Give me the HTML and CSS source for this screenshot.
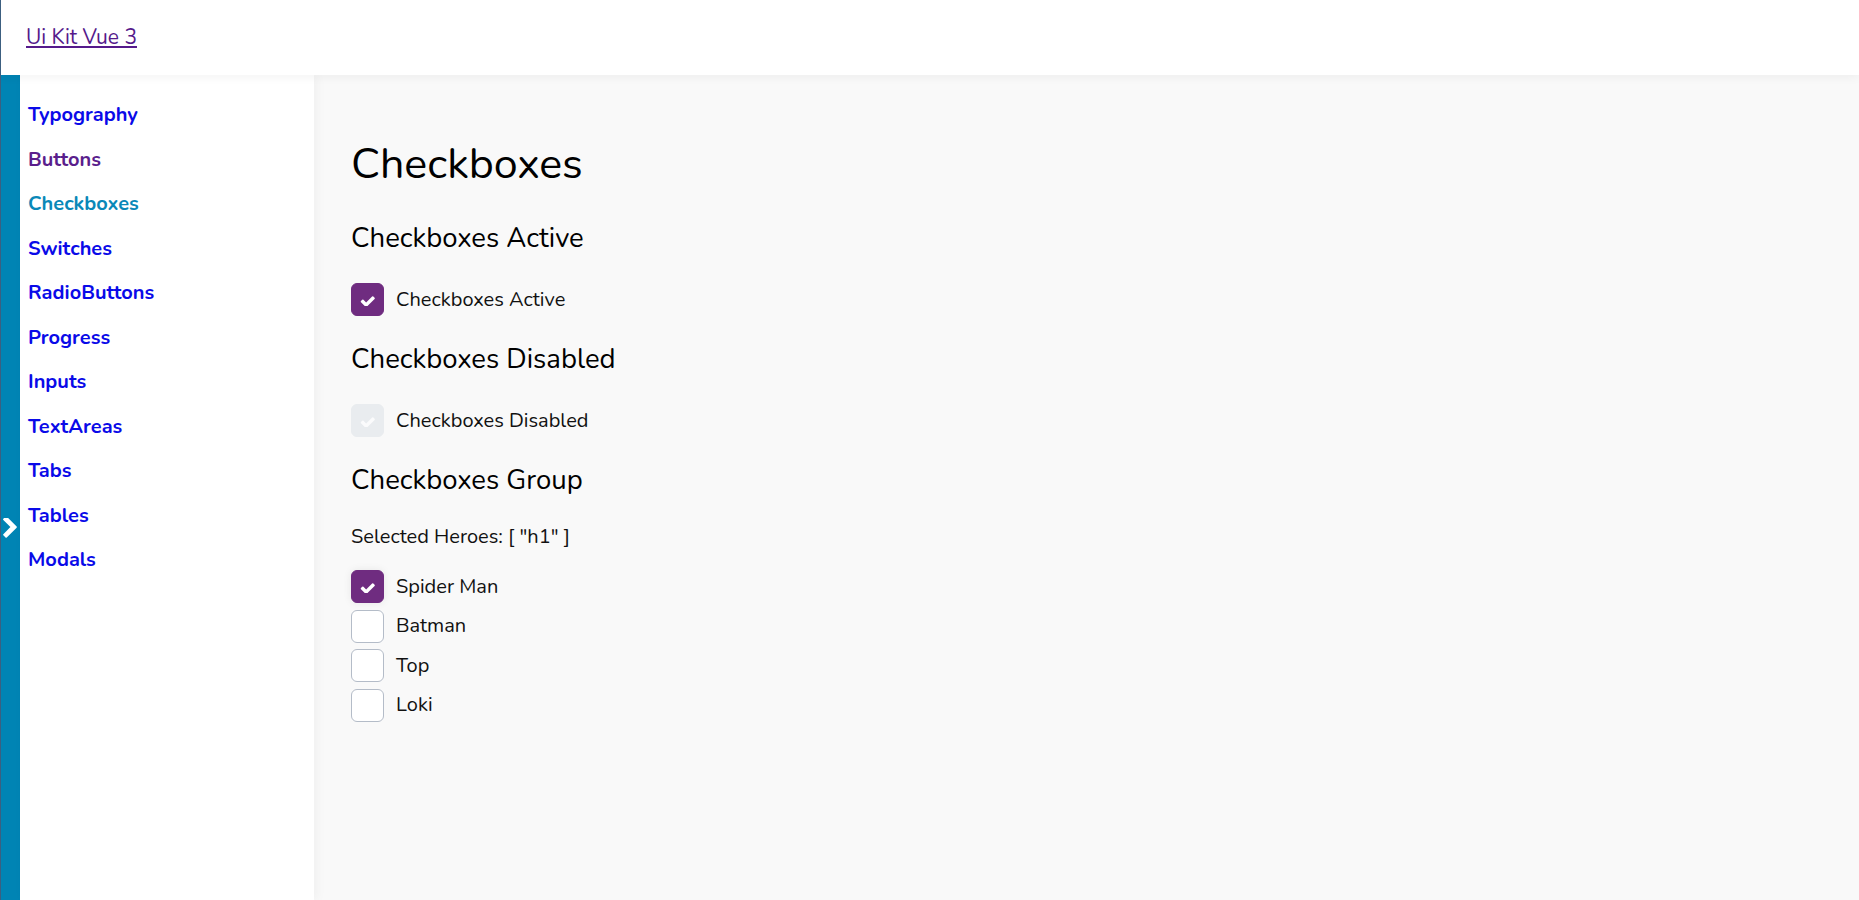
FILE: index.html
```html
<!DOCTYPE html>
<html lang="en">
<head>
<meta charset="utf-8">
<title>Ui Kit Vue 3</title>
<link rel="stylesheet" href="styles.css">
</head>
<body>
<div class="app">
  <header class="topbar">
    <a class="brand" href="#">Ui Kit Vue 3</a>
  </header>
  <div class="body">
    <div class="strip">
      <svg class="chev" viewBox="340 150 1050 1500" width="14" height="20"><path fill="#fff" d="M1363 877l-742 742q-19 19-45 19t-45-19l-166-166q-19-19-19-45t19-45l531-531-531-531q-19-19-19-45t19-45l166-166q19-19 45-19t45 19l742 742q19 19 19 45t-19 45z"/></svg>
    </div>
    <nav class="sidebar">
      <a class="nav-link" href="#">Typography</a>
      <a class="nav-link visited" href="#">Buttons</a>
      <a class="nav-link active" href="#">Checkboxes</a>
      <a class="nav-link" href="#">Switches</a>
      <a class="nav-link" href="#">RadioButtons</a>
      <a class="nav-link" href="#">Progress</a>
      <a class="nav-link" href="#">Inputs</a>
      <a class="nav-link" href="#">TextAreas</a>
      <a class="nav-link" href="#">Tabs</a>
      <a class="nav-link" href="#">Tables</a>
      <a class="nav-link" href="#">Modals</a>
    </nav>
    <main class="main">
      <h1 class="page-title">Checkboxes</h1>

      <section class="section">
        <h2 class="section-title">Checkboxes Active</h2>
        <label class="check">
          <span class="box checked"><svg class="tick" viewBox="40 300 1650 1100" width="15" height="10"><path d="M1671 566q0 40-28 68l-724 724-136 136q-28 28-68 28t-68-28l-136-136-362-362q-28-28-28-68t28-68l136-136q28-28 68-28t68 28l294 295 656-657q28-28 68-28t68 28l136 136q28 28 28 68z"/></svg></span>
          <span class="label">Checkboxes Active</span>
        </label>
      </section>

      <section class="section">
        <h2 class="section-title">Checkboxes Disabled</h2>
        <label class="check">
          <span class="box disabled"><svg class="tick" viewBox="40 300 1650 1100" width="15" height="10"><path d="M1671 566q0 40-28 68l-724 724-136 136q-28 28-68 28t-68-28l-136-136-362-362q-28-28-28-68t28-68l136-136q28-28 68-28t68 28l294 295 656-657q28-28 68-28t68 28l136 136q28 28 28 68z"/></svg></span>
          <span class="label">Checkboxes Disabled</span>
        </label>
      </section>

      <section class="section">
        <h2 class="section-title">Checkboxes Group</h2>
        <p class="selected">Selected Heroes: [ "h1" ]</p>
        <div class="group">
          <label class="check">
            <span class="box checked glow"><svg class="tick" viewBox="40 300 1650 1100" width="15" height="10"><path d="M1671 566q0 40-28 68l-724 724-136 136q-28 28-68 28t-68-28l-136-136-362-362q-28-28-28-68t28-68l136-136q28-28 68-28t68 28l294 295 656-657q28-28 68-28t68 28l136 136q28 28 28 68z"/></svg></span>
            <span class="label">Spider Man</span>
          </label>
          <label class="check">
            <span class="box"></span>
            <span class="label">Batman</span>
          </label>
          <label class="check">
            <span class="box"></span>
            <span class="label">Top</span>
          </label>
          <label class="check">
            <span class="box"></span>
            <span class="label">Loki</span>
          </label>
        </div>
      </section>
    </main>
  </div>
</div>
</body>
</html>
```

FILE: styles.css
```css
* { box-sizing: border-box; }

html, body {
  margin: 0;
  height: 100%;
}

body {
  font-family: "Nunito", "Open Sans", "Noto Sans", sans-serif;
  color: #111;
  background: #f8f8f8;
}

.app {
  display: flex;
  flex-direction: column;
  height: 900px;
  border-left: 1px solid #3c5f80;
  overflow: hidden;
}

.topbar {
  height: 75px;
  flex: none;
  background: #fff;
  display: flex;
  align-items: center;
  padding-left: 25px;
  position: relative;
  z-index: 3;
  box-shadow: 0 2px 10px rgba(0, 0, 0, 0.05);
}

.brand {
  color: #551a8b;
  font-size: 21px;
  line-height: 24px;
  text-decoration: underline;
  text-underline-offset: 2px;
  margin-top: -2px;
}

.body {
  flex: 1;
  display: flex;
  min-height: 0;
}

.strip {
  width: 19px;
  flex: none;
  background: #0084b4;
  display: flex;
  flex-direction: column;
  align-items: center;
  padding-top: 443px;
}

.chev {
  display: block;
  margin-right: 2px;
}

.sidebar {
  width: 294px;
  flex: none;
  background: #fff;
  display: flex;
  flex-direction: column;
  padding: 18px 0 0 8px;
  position: relative;
  z-index: 2;
  box-shadow: 3px 0 10px rgba(0, 0, 0, 0.04);
}

.nav-link {
  display: block;
  font-size: 20px;
  font-weight: 700;
  line-height: 24.5px;
  padding: 10px 0;
  color: #0a0ae8;
  text-decoration: none;
}

.nav-link.visited { color: #5a1e8c; }
.nav-link.active { color: #0a88b8; }

.main {
  flex: 1;
  background: #f9f9f9;
  padding: 63px 0 0 37px;
}

.page-title {
  margin: 0 0 32px;
  font-size: 43px;
  line-height: 52px;
  font-weight: 400;
  color: #000;
}

.section + .section { margin-top: 27px; }

.section-title {
  margin: 0 0 29px;
  font-size: 27.5px;
  line-height: 32px;
  font-weight: 400;
  color: #000;
}

.check {
  display: flex;
  align-items: center;
  gap: 12px;
  height: 33px;
}

.box {
  width: 33px;
  height: 33px;
  border-radius: 6px;
  border: 1px solid #b4bcc8;
  background: #fff;
  display: flex;
  align-items: center;
  justify-content: center;
  flex: none;
}

.tick {
  display: block;
  fill: #fff;
  margin-top: 2px;
}

.box.checked {
  background: #6f2c80;
  border-color: #6f2c80;
}

.box.glow {
  box-shadow: 0 0 8px rgba(0, 0, 0, 0.08);
}

.box.disabled {
  background: #e9ecef;
  border-color: #e9ecef;
}

.box.disabled .tick { fill: #fbfbfc; }

.label {
  font-size: 20px;
  line-height: 24px;
  color: #111;
}

.selected {
  margin: 0 0 21px;
  font-size: 20px;
  line-height: 24px;
  color: #111;
}

.group {
  display: flex;
  flex-direction: column;
  gap: 6.5px;
}
```
